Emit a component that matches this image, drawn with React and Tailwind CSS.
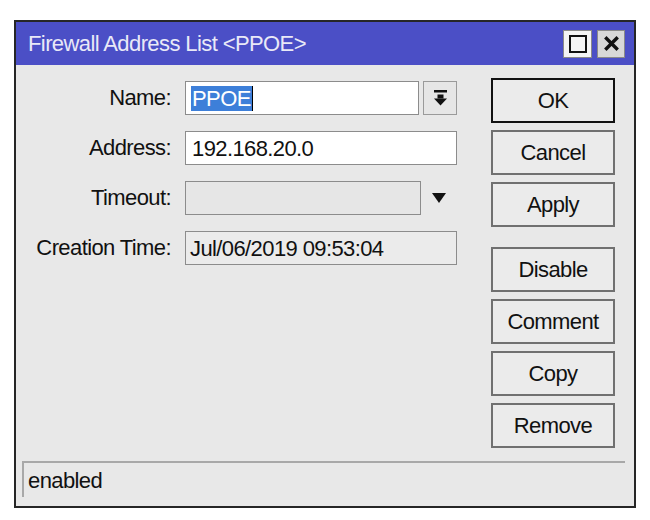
import React from 'react';

const FONT = { fontFamily: '"Liberation Sans", Arial, sans-serif' };

function Field({ label, children }) {
  return (
    <div className="flex items-center h-[34px]">
      <div className="w-[155px] text-right text-[22px] tracking-[-0.6px] text-[#111] leading-none">{label}</div>
      <div className="ml-[14px] flex items-center flex-1 h-full">{children}</div>
    </div>
  );
}

function Btn({ children, primary }) {
  return (
    <button
      className={`h-[45px] w-full flex items-center justify-center text-[22px] tracking-[-0.6px] text-[#111] bg-[#ebebeb] ${
        primary ? 'border-2 border-[#111]' : 'border-2 border-[#707070]'
      }`}
    >
      {children}
    </button>
  );
}

export default function App() {
  return (
    <div className="w-[650px] h-[520px] bg-white relative" style={FONT}>
      <div className="absolute left-[14px] top-[20px] w-[622px] h-[488px] border-2 border-[#262626] bg-[#e8e8e8] flex flex-col">
        {/* Title bar */}
        <div className="h-[43px] bg-[#4b4fc6] flex items-center pl-[12px] pr-[9px]">
          <div className="flex-1 text-[22px] tracking-[-0.6px] text-[#e9e9f7] leading-none">Firewall Address List &lt;PPOE&gt;</div>
          <div className="flex gap-[5px]">
            <div className="w-[29px] h-[28px] bg-[#f4f4f4] border border-[#8a8a8a] flex items-center justify-center">
              <div className="w-[18px] h-[18px] border-2 border-[#111]" />
            </div>
            <div className="w-[28px] h-[28px] bg-[#d8d8d8] border border-[#8a8a8a] flex items-center justify-center">
              <svg width="15" height="15" viewBox="0 0 15 15">
                <path d="M2.5 2.5 L12.5 12.5 M12.5 2.5 L2.5 12.5" stroke="#111" strokeWidth="3.4" strokeLinecap="square" />
              </svg>
            </div>
          </div>
        </div>

        {/* Body */}
        <div className="flex flex-1">
          <div className="w-[441px] pt-[16px] flex flex-col gap-4">
            <Field label="Name:">
              <div className="w-[234px] h-full bg-white border border-[#8c8c8c] flex items-center pl-[5px]">
                <span className="bg-[#3d7fd9] text-white text-[22px] tracking-[-0.6px] leading-[25px] px-[1px]">PPOE</span>
                <span className="w-px h-[25px] bg-black" />
              </div>
              <div className="ml-[4px] w-[34px] h-full bg-[#e6e6e6] border border-[#9a9a9a] flex items-center justify-center">
                <svg width="13" height="16" viewBox="0 0 13 16">
                  <rect x="0" y="0" width="13" height="2.5" fill="#111" />
                  <rect x="3.5" y="4.5" width="6" height="4" fill="#111" />
                  <path d="M0 8.5 L13 8.5 L6.5 15.5 Z" fill="#111" />
                </svg>
              </div>
            </Field>
            <Field label="Address:">
              <div className="w-[272px] h-full bg-white border border-[#8c8c8c] flex items-center pl-[6px] text-[22px] tracking-[-0.6px] text-[#111]">
                192.168.20.0
              </div>
            </Field>
            <Field label="Timeout:">
              <div className="w-[236px] h-full bg-[#e6e6e6] border border-[#8c8c8c]" />
              <div className="w-[36px] flex items-center justify-center">
                <svg width="14" height="10" viewBox="0 0 14 10">
                  <path d="M0 0 L14 0 L7 10 Z" fill="#111" />
                </svg>
              </div>
            </Field>
            <Field label="Creation Time:">
              <div className="w-[272px] h-full bg-[#ebebeb] border border-[#8c8c8c] flex items-center pl-[4px] text-[22px] tracking-[-0.6px] text-[#111]">
                Jul/06/2019 09:53:04
              </div>
            </Field>
          </div>

          <div className="ml-[34px] w-[124px] pt-[13px] flex flex-col">
            <div className="flex flex-col gap-[7px]">
              <Btn primary>OK</Btn>
              <Btn>Cancel</Btn>
              <Btn>Apply</Btn>
            </div>
            <div className="mt-[20px] flex flex-col gap-[7px]">
              <Btn>Disable</Btn>
              <Btn>Comment</Btn>
              <Btn>Copy</Btn>
              <Btn>Remove</Btn>
            </div>
          </div>
        </div>

        {/* Status bar */}
        <div className="h-[36px] ml-[6px] mr-[9px] mb-[9px] border-t-2 border-l-2 border-[#a8a8a8] flex items-center pl-[4px] text-[22px] tracking-[-0.6px] text-[#111]">
          enabled
        </div>
      </div>
    </div>
  );
}
